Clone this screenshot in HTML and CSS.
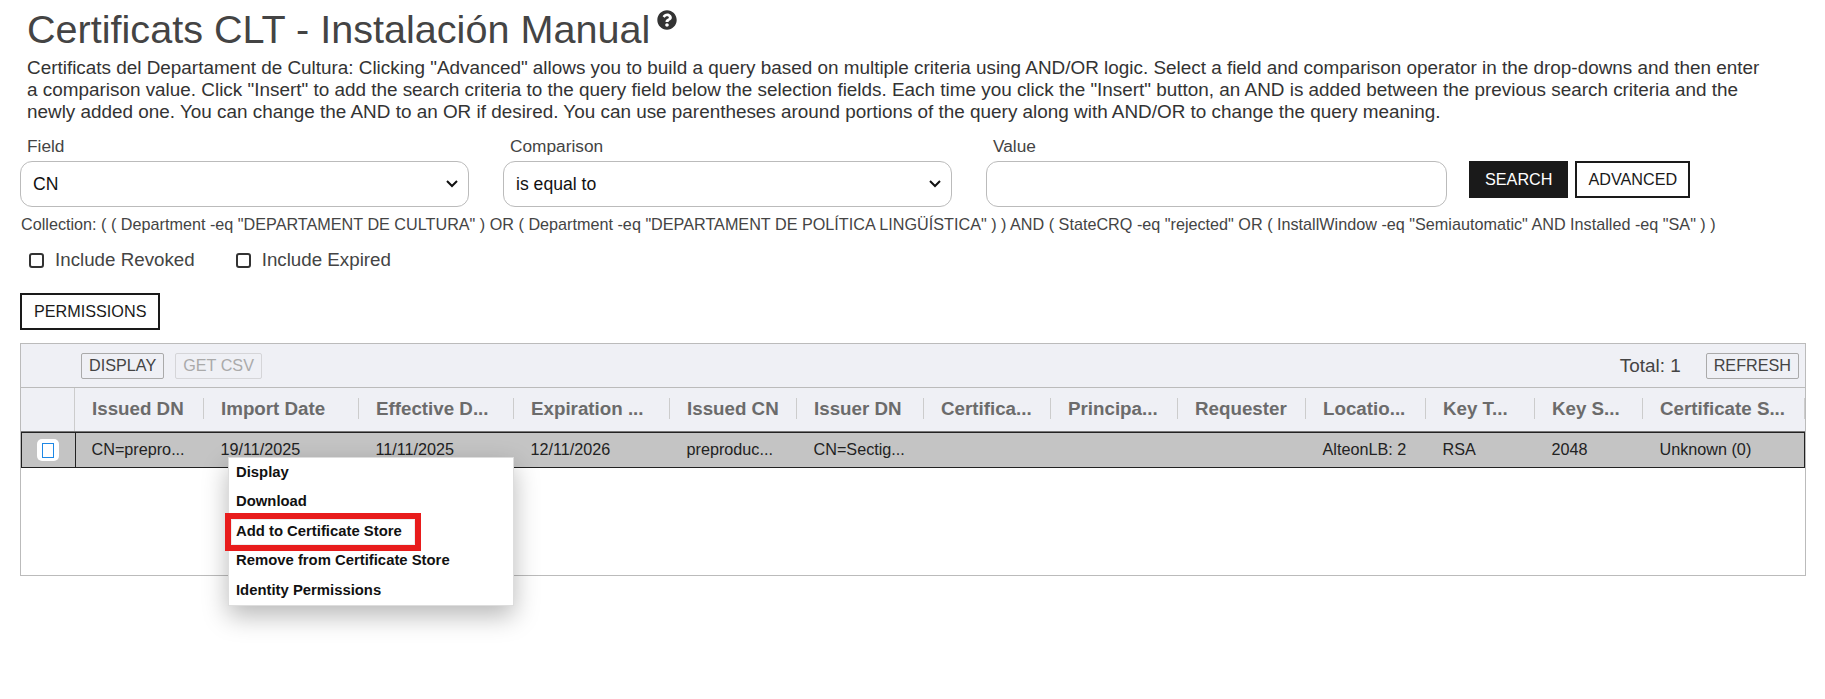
FILE: index.html
```html
<!DOCTYPE html>
<html lang="en">
<head>
<meta charset="utf-8">
<title>Certificats CLT - Instalación Manual</title>
<link rel="stylesheet" href="styles.css">
</head>
<body>
<header class="head">
  <h1 class="title">Certificats CLT - Instalación Manual</h1>
  <svg class="help" viewBox="0 0 512 512"><path fill="#333" d="M504 256c0 137-111 248-248 248S8 393 8 256 119 8 256 8s248 111 248 248zM263 90c-54 0-89 23-116 63-4 5-2 12 3 16l35 26c5 4 13 3 17-2 18-23 30-36 57-36 20 0 45 13 45 32 0 15-12 22-32 33-23 13-54 29-54 70v6c0 7 5 12 12 12h56c7 0 12-5 12-12v-2c0-28 82-29 82-105 0-57-59-101-117-101zm-7 248c-25 0-45 20-45 45s20 45 45 45 45-20 45-45-20-45-45-45z"/></svg>
</header>
<p class="intro">Certificats del Departament de Cultura: Clicking "Advanced" allows you to build a query based on multiple criteria using AND/OR logic. Select a field and comparison operator in the drop-downs and then enter a comparison value. Click "Insert" to add the search criteria to the query field below the selection fields. Each time you click the "Insert" button, an AND is added between the previous search criteria and the newly added one. You can change the AND to an OR if desired. You can use parentheses around portions of the query along with AND/OR to change the query meaning.</p>

<form class="search">
  <label class="field"><span class="field-label">Field</span>
    <select class="control control-select"><option>CN</option></select></label>
  <label class="field"><span class="field-label">Comparison</span>
    <select class="control control-select"><option>is equal to</option></select></label>
  <label class="field field-value"><span class="field-label">Value</span>
    <input class="control" type="text"></label>
  <div class="search-actions">
    <button type="button" class="btn btn-dark">SEARCH</button>
    <button type="button" class="btn">ADVANCED</button>
  </div>
</form>
<p class="collection">Collection: ( ( Department -eq "DEPARTAMENT DE CULTURA" ) OR ( Department -eq "DEPARTAMENT DE POLÍTICA LINGÜÍSTICA" ) ) AND ( StateCRQ -eq "rejected" OR ( InstallWindow -eq "Semiautomatic" AND Installed -eq "SA" ) )</p>
<div class="checks">
  <label class="check"><input type="checkbox"><span>Include Revoked</span></label>
  <label class="check"><input type="checkbox"><span>Include Expired</span></label>
</div>
<button type="button" class="btn btn-perm">PERMISSIONS</button>

<section class="panel">
  <div class="toolbar">
    <button type="button" class="tool">DISPLAY</button>
    <button type="button" class="tool tool-off">GET CSV</button>
    <span class="total">Total: 1</span>
    <button type="button" class="tool">REFRESH</button>
  </div>
  <div class="cols head-row">
    <div class="sel-head"></div>
    <div class="th">Issued DN</div>
    <div class="th">Import Date</div>
    <div class="th">Effective D...</div>
    <div class="th">Expiration ...</div>
    <div class="th">Issued CN</div>
    <div class="th">Issuer DN</div>
    <div class="th">Certifica...</div>
    <div class="th">Principa...</div>
    <div class="th">Requester</div>
    <div class="th">Locatio...</div>
    <div class="th">Key T...</div>
    <div class="th">Key S...</div>
    <div class="th">Certificate S...</div>
  </div>
  <div class="cols data-row">
    <div class="sel-cell"><span class="tick"><i></i></span></div>
    <div class="td">CN=prepro...</div>
    <div class="td">19/11/2025</div>
    <div class="td">11/11/2025</div>
    <div class="td">12/11/2026</div>
    <div class="td">preproduc...</div>
    <div class="td">CN=Sectig...</div>
    <div class="td"></div>
    <div class="td"></div>
    <div class="td"></div>
    <div class="td">AlteonLB: 2</div>
    <div class="td">RSA</div>
    <div class="td">2048</div>
    <div class="td">Unknown (0)</div>
  </div>
</section>

<ul class="menu">
  <li>Display</li>
  <li>Download</li>
  <li class="marked">Add to Certificate Store</li>
  <li>Remove from Certificate Store</li>
  <li>Identity Permissions</li>
</ul>
</body>
</html>
```
FILE: styles.css
```css
* { box-sizing: border-box; }
html, body { margin: 0; }
body {
  position: relative;
  height: 699px;
  overflow: hidden;
  padding: 0 20px;
  font-family: "Liberation Sans", Arial, sans-serif;
  color: #333;
  background: #fff;
}
.head { display: flex; align-items: flex-start; padding: 6px 0 0 7px; height: 51px; }
.title { margin: 0; font-size: 39.6px; line-height: 46px; font-weight: 400; color: #444; }
.help { width: 20px; height: 20px; margin: 4px 0 0 7px; }
.intro { margin: 6px 0 0 7px; width: 1746px; font-size: 18.9px; line-height: 22px; color: #333; }
.search { display: flex; margin-top: 12px; }
.field { display: flex; flex-direction: column; width: 449px; margin-right: 34px; }
.field-value { width: 461px; margin-right: 22px; }
.field-label { padding: 1px 0 0 7px; height: 26px; font-size: 17.3px; line-height: 20px; color: #444; }
.control {
  width: 100%;
  height: 46px;
  padding: 0 8px;
  border: 1px solid #bbb;
  border-radius: 12px;
  background: #fff;
  font: 17.6px "Liberation Sans", Arial, sans-serif;
  color: #111;
}
.control-select {
  appearance: none;
  padding-left: 12px;
  background: #fff url("data:image/svg+xml,%3Csvg xmlns='http://www.w3.org/2000/svg' width='12' height='8'%3E%3Cpath d='M1 1l5 5 5-5' fill='none' stroke='%23111' stroke-width='2'/%3E%3C/svg%3E") no-repeat right 10px center;
}
.search-actions { display: flex; gap: 7px; padding-top: 26px; }
.btn {
  height: 37px;
  padding: 0 11px;
  border: 2px solid #1a1a1a;
  background: #fff;
  color: #1a1a1a;
  font: 16.2px "Liberation Sans", Arial, sans-serif;
}
.btn-dark { background: #1a1a1a; color: #fff; padding: 0 14px; }
.collection { margin: 8px 0 0 1px; font-size: 16.2px; line-height: 18px; color: #444; white-space: nowrap; }
.checks { display: flex; gap: 41px; margin-top: 15px; padding-left: 9px; }
.check { display: flex; align-items: center; gap: 11px; font-size: 18.75px; line-height: 24px; color: #444; }
.check input { appearance: none; margin: 0; width: 15px; height: 15px; border: 2px solid #333; border-radius: 3px; background: #fff; }
.btn-perm { display: block; margin-top: 21px; padding: 0 12px; }
.panel {
  margin-top: 13px;
  width: 1786px;
  height: 233px;
  border: 1px solid #bbb;
  background: #fff;
}
.toolbar {
  display: flex;
  align-items: center;
  gap: 11px;
  height: 44px;
  padding: 0 6px 0 60px;
  background: #eff0f5;
  border-bottom: 1px solid #bbb;
}
.tool {
  height: 26px;
  padding: 0 7px;
  border: 1px solid #aaa;
  border-radius: 2px;
  background: #eff0f5;
  color: #444;
  font: 16.2px "Liberation Sans", Arial, sans-serif;
}
.tool-off { color: #aaa; border-color: #d5d5d8; }
.total { margin-left: auto; margin-right: 14px; font-size: 18.9px; color: #444; }
.cols { display: grid; grid-template-columns: 54px 129px 155px 155px 156px 127px 127px 127px 127px 128px 120px 109px 108px 162px; }
.head-row { height: 45px; background: #eff0f5; align-items: center; border-bottom: 2px solid #777; }
.sel-head { align-self: stretch; border-right: 1px solid #ccc; }
.th {
  margin-bottom: 2px;
  padding-left: 17px;
  height: 21px;
  font-size: 18.75px;
  line-height: 21px;
  font-weight: 700;
  color: #6b6b6b;
  white-space: nowrap;
  border-right: 1px solid #ccc;
  overflow: hidden;
}
.data-row { height: 36px; background: #c4c4c4; border: 1px solid #222; align-items: center; margin-top: -1px; }
.sel-cell { align-self: stretch; display: flex; align-items: center; padding-left: 15px; border-right: 1px solid #222; }
.tick { display: flex; align-items: center; justify-content: center; width: 22px; height: 22px; background: #fff; border-radius: 5px; }
.tick i { display: block; width: 12px; height: 15px; border: 1px solid #1e88e5; }
.td { margin-bottom: 2px; padding-left: 15.5px; font-size: 16.2px; line-height: 20px; color: #222; white-space: nowrap; }
.menu {
  position: absolute;
  left: 228px;
  top: 457px;
  width: 286px;
  height: 149px;
  margin: 0;
  padding: 0;
  list-style: none;
  background: #fff;
  border: 1px solid #ddd;
  box-shadow: 0 10px 24px rgba(0, 0, 0, .28);
  font-size: 14.85px;
  font-weight: 700;
  color: #111;
}
.menu li { height: 29.4px; padding: 2px 0 0 7px; line-height: 24px; }
.marked { position: relative; }
.marked::after {
  content: "";
  position: absolute;
  box-sizing: border-box;
  left: -4px;
  top: -4px;
  width: 196px;
  height: 38px;
  border: 6px solid #e81c1c;
  box-shadow: inset 0 0 0 1px #eee;
}
```
